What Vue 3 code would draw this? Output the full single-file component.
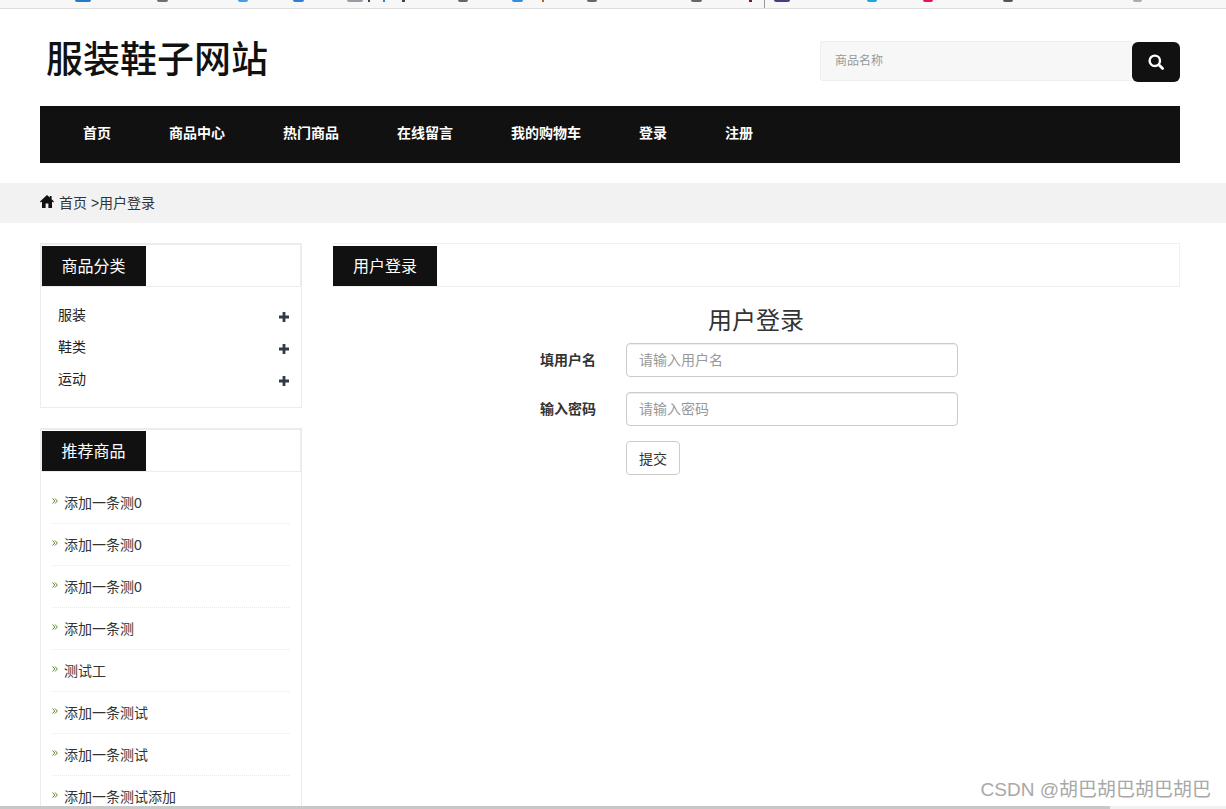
<script setup>
const nav = ['首页', '商品中心', '热门商品', '在线留言', '我的购物车', '登录', '注册']
const cats = ['服装', '鞋类', '运动']
const recs = ['添加一条测0', '添加一条测0', '添加一条测0', '添加一条测', '测试工', '添加一条测试', '添加一条测试', '添加一条测试添加']
const raw = [
  [75, 16, '#2a78c0'], [157, 11, '#6a7078'], [238, 10, '#4a9be8'], [293, 11, '#2f7fd0'],
  [347, 16, '#9a9aa4'], [368, 2, '#444'], [383, 2, '#2f7fd0'], [402, 3, '#444'],
  [458, 10, '#666'], [512, 11, '#3a8ad8'], [542, 2, '#b0662a'], [587, 10, '#666'],
  [691, 11, '#666'], [749, 3, '#7a1a30'], [764, 1, '#999'], [774, 16, '#4a3a80'],
  [867, 10, '#1aa7e0'], [923, 10, '#e8124f'], [1003, 10, '#555'], [1133, 9, '#a8acb4']
]
const frags = raw.map(([x, w, c], i) => ({
  key: i,
  style: {
    marginLeft: (i ? x - raw[i - 1][0] - raw[i - 1][1] : x) + 'px',
    width: w + 'px',
    background: c,
    height: w === 1 ? '8px' : '2px',
    borderRadius: w > 5 ? '0 0 5px 5px' : '0'
  }
}))
</script>

<template>
  <div class="page">
    <div class="browserbar">
      <i v-for="f in frags" :key="f.key" :style="f.style"></i>
    </div>
    <div class="wrap">
      <header class="header">
        <h1 class="logo">服装鞋子网站</h1>
        <form class="search" @submit.prevent>
          <input class="search-input" placeholder="商品名称" />
          <button class="search-btn" type="button" aria-label="搜索">
            <svg width="18" height="18" viewBox="0 0 18 18" fill="none">
              <circle cx="7.800" cy="7.800" r="5.200" stroke="#fff" stroke-width="2.400" />
              <path d="M11.800 11.800 15.600 15.600" stroke="#fff" stroke-width="2.800" stroke-linecap="round" />
            </svg>
          </button>
        </form>
      </header>
      <nav class="nav">
        <a v-for="n in nav" :key="n" class="nav-item">{{ n }}</a>
      </nav>
    </div>
    <div class="crumb">
      <div class="crumb-inner">
        <svg class="home" width="14" height="13" viewBox="0 0 14 13">
          <path d="M7 0 0 6.600l.9.9L2 6.500V13h3.600V8.600h2.800V13H12V6.500l1.100 1 .9-.9L11.600 4.300V1H9.800v1.500Z" fill="#111" />
        </svg>
        <span class="crumb-text">首页 &gt;用户登录</span>
      </div>
    </div>
    <div class="wrap main">
      <aside class="side">
        <section class="box">
          <div class="box-head double"><h3 class="box-title">商品分类</h3></div>
          <ul class="cats">
            <li v-for="c in cats" :key="c" class="cat">
              <span class="cat-name">{{ c }}</span>
              <svg width="10" height="10" viewBox="0 0 10 10"><path d="M3.600 0h2.800v3.600H10v2.800H6.400V10H3.600V6.400H0V3.600h3.600Z" fill="#333a45" /></svg>
            </li>
          </ul>
        </section>
        <section class="box">
          <div class="box-head double"><h3 class="box-title">推荐商品</h3></div>
          <ul class="recs">
            <li v-for="(r, i) in recs" :key="i" class="rec">
              <svg class="arrow" width="6" height="6" viewBox="0 0 6 6" fill="none">
                <path d="M.5.5 2.800 3 .5 5.500M3 .5 5.300 3 3 5.500" stroke="#4a7a10" stroke-width=".9" />
              </svg>
              <span class="rec-text">{{ r }}</span>
            </li>
          </ul>
        </section>
      </aside>
      <section class="content">
        <div class="box-head single"><h3 class="box-title">用户登录</h3></div>
        <h2 class="form-title">用户登录</h2>
        <form class="form" @submit.prevent>
          <div class="row">
            <label class="label">填用户名</label>
            <input class="field" placeholder="请输入用户名" />
          </div>
          <div class="row">
            <label class="label">输入密码</label>
            <input class="field" type="password" placeholder="请输入密码" />
          </div>
          <div class="row">
            <span class="label"></span>
            <button class="submit" type="button">提交</button>
          </div>
        </form>
      </section>
    </div>
    <div class="watermark">CSDN @胡巴胡巴胡巴胡巴</div>
    <div class="scrollbar"><div class="thumb"></div></div>
  </div>
</template>

<style>
html, body { margin: 0; background: #fff; overflow: hidden; }
</style>

<style scoped>
.page {
  position: relative;
  width: 1226px;
  height: 809px;
  overflow: hidden;
  font-family: "Liberation Sans", "Noto Sans CJK SC", sans-serif;
  font-size: 14px;
  color: #333;
}
.browserbar { height: 8px; background: #f7f7f7; border-bottom: 1px solid #ddd; display: flex; align-items: flex-start; }
.browserbar i { display: block; flex: none; }
.wrap { width: 1140px; margin-left: 40px; }
.header { height: 97px; display: flex; justify-content: space-between; align-items: flex-start; }
.logo { margin: 27px 0 0 6px; font-size: 37px; line-height: 50px; font-weight: 500; color: #111; }
.search { display: flex; margin-top: 32px; }
.search-input {
  box-sizing: border-box; width: 312px; height: 40px; padding: 0 14px;
  background: #f7f7f7; border: 1px solid #eee; border-right: 0; border-radius: 3px 0 0 3px;
  font: 12px "Liberation Sans", "Noto Sans CJK SC", sans-serif; outline: none;
}
.search-input::placeholder { color: #999; }
.search-btn {
  width: 48px; height: 40px; margin-top: 1px; padding: 0; border: 0; border-radius: 6px;
  background: #111; display: flex; align-items: center; justify-content: center;
}
.nav { height: 57px; background: #111; display: flex; padding-left: 14px; }
.nav-item { padding: 0 29px; line-height: 54px; color: #fff; font-size: 14px; font-weight: 700; }
.crumb { margin-top: 20px; height: 40px; background: #f2f2f2; }
.crumb-inner { margin-left: 40px; height: 40px; display: flex; align-items: center; gap: 5px; color: #333; font-size: 14px; }
.crumb-text { padding-bottom: 3px; }
.home { flex: none; margin-top: -3px; }
.main { margin-top: 20px; display: flex; gap: 31px; align-items: flex-start; }
.side { width: 262px; flex: none; display: flex; flex-direction: column; gap: 20px; }
.box { box-sizing: border-box; border: 1px solid #ececec; }
.box-head { box-sizing: border-box; }
.box-head.double { height: 43px; border: 1px solid #ececec; padding-top: 1px; }
.box-title {
  box-sizing: border-box; margin: 0; width: 104px; height: 40px; line-height: 41px; text-align: center;
  background: #111; color: #fff; font-size: 16px; font-weight: 400;
}
.double .box-title { padding-right: 1px; }
.cats { list-style: none; margin: 0; padding: 12px 12px 12px 17px; }
.cat { height: 32px; display: flex; align-items: center; justify-content: space-between; color: #222; font-size: 14px; }
.cat-name { padding-bottom: 2px; }
.cat svg { margin-top: 3px; }
.recs { list-style: none; margin: 0; padding: 10px 12px 0 11px; }
.rec { box-sizing: border-box; height: 42px; border-bottom: 1px dotted #e8e8e8; display: flex; align-items: center; gap: 6px; font-size: 14px; color: #333; }
.rec-text { padding-bottom: 2px; }
.arrow { flex: none; margin-top: -4px; }
.content { flex: 1; min-width: 0; }
.box-head.single { height: 44px; border: 1px solid #f0f0f0; padding-top: 2px; }
.box-head.single .box-title { margin-left: -1px; }
.form-title { margin: 18px 0 0; text-align: center; font-size: 24px; line-height: 32px; font-weight: 400; color: #333; width: 846px; }
.row { display: flex; margin-bottom: 15px; align-items: center; }
.row:first-child { margin-top: 6px; }
.label { box-sizing: border-box; width: 263px; margin-right: 30px; padding-bottom: 2px; text-align: right; font-size: 14px; font-weight: 700; color: #333; }
.field {
  box-sizing: border-box; width: 332px; height: 34px; padding: 6px 12px;
  border: 1px solid #ccc; border-radius: 4px; font: 14px "Liberation Sans", "Noto Sans CJK SC", sans-serif;
  box-shadow: inset 0 1px 1px rgba(0,0,0,.075); outline: none;
}
.field::placeholder { color: #999; }
.submit {
  box-sizing: border-box; width: 54px; height: 34px; padding: 0; background: #fff;
  border: 1px solid #ccc; border-radius: 4px; color: #333;
  font: 14px "Liberation Sans", "Noto Sans CJK SC", sans-serif;
}
.watermark {
  position: absolute; right: 15px; top: 778px; font-size: 19px; line-height: 24px; color: #a8a8a8;
}
.scrollbar { position: absolute; left: 0; right: 0; bottom: 0; height: 3px; background: #f1f1f1; }
.thumb { width: 1110px; height: 3px; background: #c8c8c8; }
</style>
